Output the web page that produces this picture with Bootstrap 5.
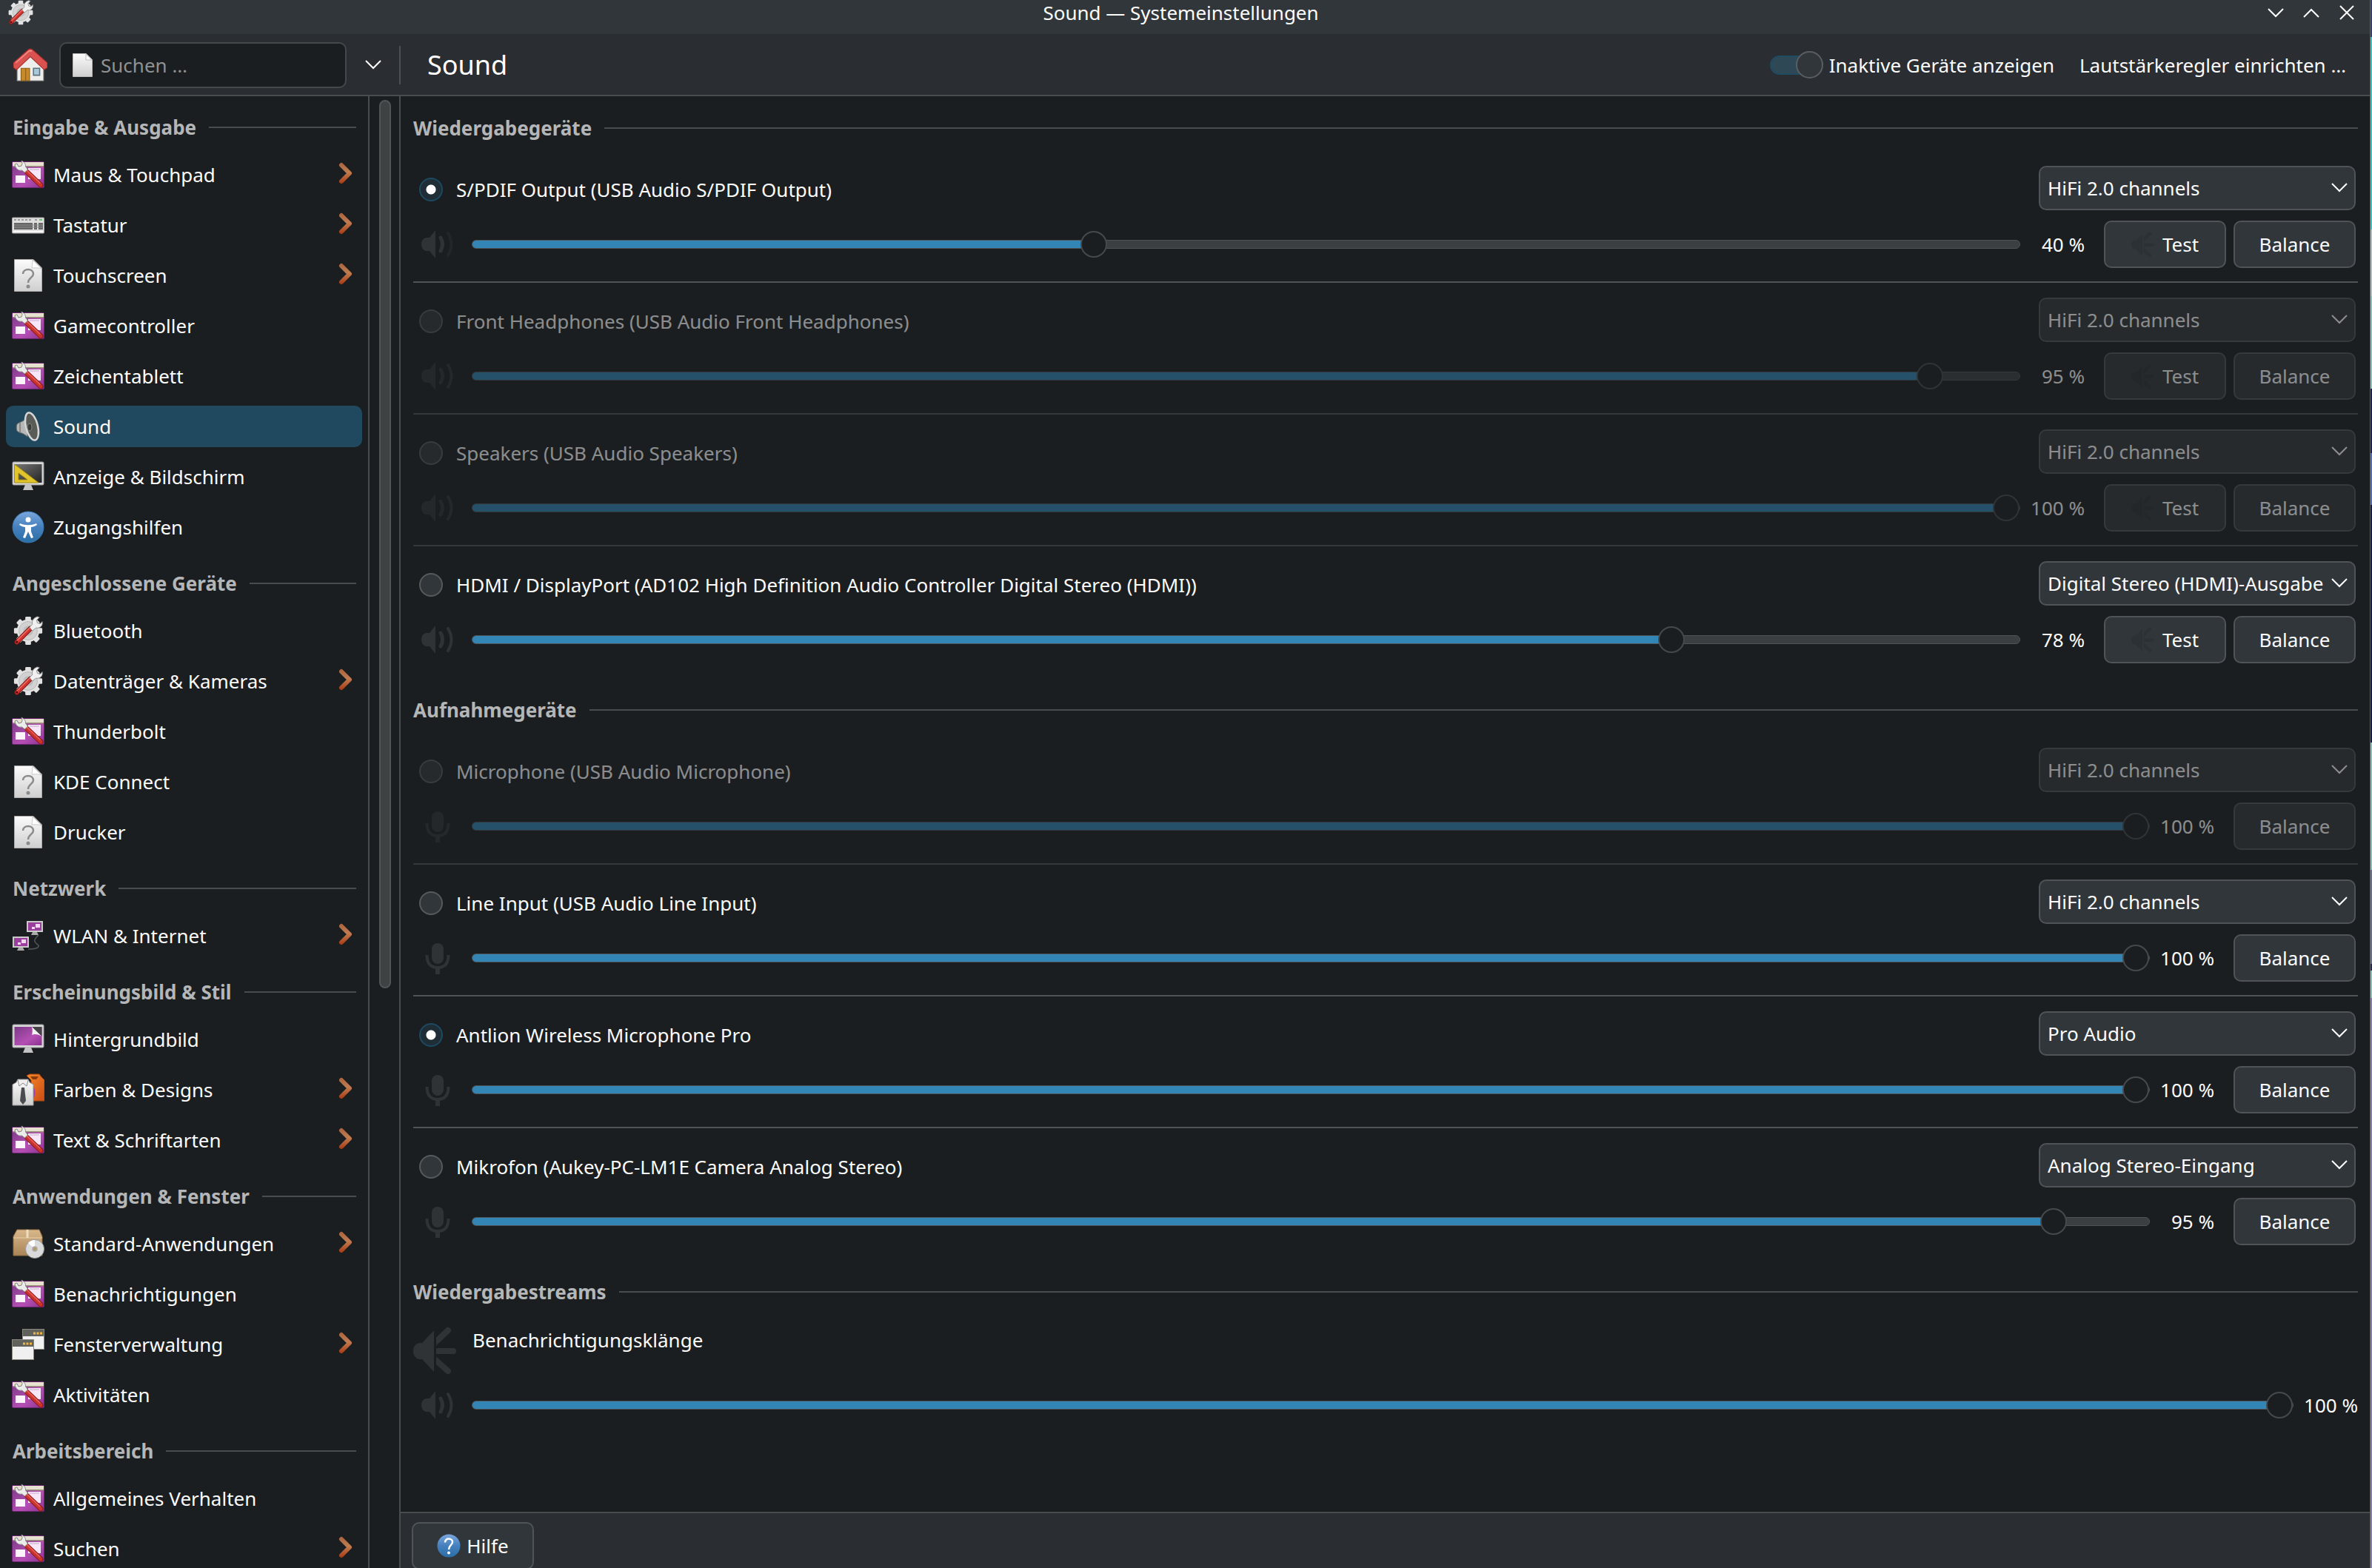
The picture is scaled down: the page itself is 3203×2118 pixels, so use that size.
<!DOCTYPE html>
<html lang="de" data-bs-theme="dark">
<head>
<meta charset="utf-8">
<meta name="viewport" content="width=device-width, initial-scale=1">
<title>Sound — Systemeinstellungen</title>
<link href="https://cdn.jsdelivr.net/npm/bootstrap@5.3.0/dist/css/bootstrap.min.css" rel="stylesheet">
<style>
:root{--view:#1b1e20;--bar:#2a2d32;--btn:#31363b;--line:#494c4f;--edge:#505458;--blue:#3285b5;--ink:#fcfcfc}
html,body{height:100%}
body{font-family:"Noto Sans",sans-serif;font-size:26px;line-height:36px;color:var(--ink);overflow:hidden;padding-right:2px;
 background:linear-gradient(#3c3a78 0 50px,#1fd0cc 50px 310px,#b4bcbc 310px 400px,#7fc9b8 400px 525px,#1c1f5c 525px 612px,#4a6cc0 612px 682px,#151a50 682px 1003px,#7fc4b8 1003px 1175px,#6a6f96 1175px 1302px,#28285a 1302px 1311px,#7fc4b8 1311px 1348px,#8d7bb8 1348px)}
svg{display:block;flex:none}
.win{background:var(--view);border-right:1px solid #5b5e61}
.titlebar{height:46px;background:#31363b;padding:0 20px 12px 9px}
.winbtn{background:none;border:0;padding:0;width:22px;color:var(--ink)}
.winbtns{gap:26px}
.side-cell{flex:1 1 0}
.toolbar{height:84px;background:var(--bar);border-bottom:2px solid var(--line);padding-top:2px}
.tool-left{width:541px;padding:0 0 0 18px}
.searchbox{width:388px;height:62px;background:var(--view);border:2px solid #45484b;border-radius:10px;padding:0 16px;gap:11px}
.searchbox input{background:none;border:0;outline:0;padding:0;color:var(--ink);font:inherit;min-width:0}
.searchbox input::placeholder{color:#8f9294;opacity:1}
.flatbtn{background:none;border:0;padding:0;color:var(--ink)}
.vsep{width:2px;height:52px;background:#4d5053}
.page-title{font-size:36px;line-height:48px;margin:0 auto 0 36px;font-weight:400}
.setup{margin:0 32px 0 34px}
.switch{appearance:none;width:72px;height:26px;margin:0;border:2px solid #1f4c63;border-radius:13px;background:#2f4856}
.switch::after{content:"";display:block;width:37px;height:37px;margin:-8px -2px 0 auto;border-radius:50%;background:var(--btn);border:2px solid #5a5e61}
.sidebar{width:499px;border-right:2px solid var(--line)}
.sidebar > *{flex:none}
.scrollcol{width:42px;border-right:2px solid var(--line);padding:5px 11px 0 13px}
.thumb{height:60.5%;background:#3f4242;border:2px solid #525556;border-radius:8px}
.sec{font-size:26px;line-height:36px;font-weight:700;color:#b4b6b7;margin:0;gap:17px}
.sec::after{content:"";flex:1;height:2px;background:var(--line)}
.sidebar .sec{height:72px;padding:12px 16px 0 17px}
.pane .sec{height:74px;padding-top:12px}
.navrow{height:56px;margin:6px 8px;padding:0 12px 0 8px;border-radius:10px;color:var(--ink);text-decoration:none;gap:12px}
.navrow.on{background:#20485e}
.more{margin-bottom:4px}
.pane{padding:0 16px 0 17px}
.device{padding:20px 3px 18px 8px;min-width:0;gap:14px}
.devlist{padding-bottom:2px}
.devitem{border-bottom:2px solid #505356}
.devitem:last-child{border-bottom:0}
.devitem:disabled{opacity:.5}
.head-line{height:60px;gap:18px}
.dev-name{gap:18px;padding-top:4px}
.vol-line{min-height:64px}
.rb{appearance:none;width:32px;height:32px;margin:0;border-radius:50%;border:2px solid #565a5d;background:var(--btn);flex:none}
.rb:checked{background:radial-gradient(circle,#fff 0 6px,#1e2d36 7px);border-color:#1d4a63}
.profile{width:428px;height:60px;font-size:26px;line-height:36px;color:var(--ink);background-color:var(--btn);border:2px solid var(--edge);border-radius:10px;padding:0 36px 0 10px;
 background-image:url("data:image/svg+xml,%3Csvg xmlns='http://www.w3.org/2000/svg' viewBox='0 0 22 13'%3E%3Cpath d='M1 1l10 10L21 1' fill='none' stroke='%23fcfcfc' stroke-width='2'/%3E%3C/svg%3E");background-size:22px 13px;background-position:right 9px center}
.profile:disabled{background-color:var(--btn);color:var(--ink)}
.push{--bs-btn-font-size:26px;--bs-btn-line-height:36px;--bs-btn-color:var(--ink);--bs-btn-bg:var(--btn);--bs-btn-border-color:var(--edge);--bs-btn-border-width:2px;--bs-btn-border-radius:10px;--bs-btn-padding-x:0px;--bs-btn-padding-y:0px;
 --bs-btn-disabled-color:var(--ink);--bs-btn-disabled-bg:var(--btn);--bs-btn-disabled-border-color:var(--edge);--bs-btn-disabled-opacity:1;--bs-btn-hover-color:var(--ink);--bs-btn-hover-bg:#3a4046;width:165px;height:64px}
.vol{appearance:none;background:none;height:36px;margin:0 0 0 25px;flex:1;min-width:0}
.vol::-webkit-slider-runnable-track{height:12px;border-radius:6px;border:1px solid #505355;
 background:linear-gradient(var(--blue),var(--blue)) 0 0/calc(18px + (100% - 36px)*var(--v)/100) 100% no-repeat,#3c3f41}
.vol::-webkit-slider-thumb{appearance:none;width:36px;height:36px;margin-top:-13px;border-radius:50%;background:var(--view);border:2px solid #46494b}
.pct{width:87px;text-align:right;white-space:nowrap}
.btns{margin-left:26px;gap:10px}
.glyph{color:#2f3336;margin-left:2px}
.push .glyph{color:#2c3135;margin-left:0}
.footer{background:var(--bar);border-top:2px solid var(--line);height:76px;padding:12px 15px 0}
.stream{padding:16px 0 0;gap:22px}
.stream-vol{padding-left:8px;margin-top:20px}
</style>
</head>
<body>
<svg width="0" height="0" class="position-absolute" aria-hidden="true">
<defs>
<linearGradient id="gp" x1="0" y1="0" x2="1" y2="1"><stop offset="0" stop-color="#7a3a86"/><stop offset=".6" stop-color="#b44fb4"/><stop offset="1" stop-color="#8a3290"/></linearGradient>
<linearGradient id="gw" x1="0" y1="0" x2="0" y2="1"><stop offset="0" stop-color="#fbfbfb"/><stop offset="1" stop-color="#cfcfcf"/></linearGradient>
<linearGradient id="gb" x1="0" y1="0" x2="0" y2="1"><stop offset="0" stop-color="#7aa8dc"/><stop offset=".5" stop-color="#4580bd"/><stop offset="1" stop-color="#2c6ea6"/></linearGradient>
<linearGradient id="go" gradientUnits="userSpaceOnUse" x1="0" y1="0" x2="0" y2="30"><stop offset="0" stop-color="#a8623c"/><stop offset=".45" stop-color="#c07c50"/><stop offset="1" stop-color="#a83610"/></linearGradient>
<linearGradient id="gd" x1="0" y1="0" x2="1" y2="1"><stop offset="0" stop-color="#777"/><stop offset="1" stop-color="#222"/></linearGradient>
<linearGradient id="gx" x1="0" y1="0" x2="0" y2="1"><stop offset="0" stop-color="#d8b98c"/><stop offset="1" stop-color="#a98456"/></linearGradient>
<linearGradient id="gs" x1="0" y1="0" x2="1" y2="1"><stop offset="0" stop-color="#f58a2a"/><stop offset="1" stop-color="#cc4a16"/></linearGradient>
<clipPath id="rays"><path d="M31 0h33v64H31z"/></clipPath>
</defs>
<symbol id="tool" viewBox="0 0 44 44">
 <rect x=".5" y="4.500" width="43" height="35" rx="1.500" fill="url(#gp)" stroke="#6a2470"/>
 <path d="M1 5h42v5H1z" fill="#e6e0cf"/><path d="M1 10h42v1.500H1z" fill="#9a8f78"/>
 <path d="M22 13h17v15H22z" fill="#f6e6f8"/><path d="M24 15h13" stroke="#c9a8cf"/>
 <path d="M5 23h13v10H5z" fill="#fbf4fc"/>
 <path d="M20 18l19 18" stroke="#8c1a18" stroke-width="7" stroke-linecap="round"/><path d="M20 18l19 18" stroke="#c9332e" stroke-width="5" stroke-linecap="round"/><path d="M20 16l18 17" stroke="#ea655c" stroke-width="1.500" stroke-linecap="round"/>
 <path d="M13 3c4 2 6 5 5.500 8l3 4-4 4-4-3C9 17 5 14 4 8l3-1 2 4 4-1 1-3z" fill="#ececea" stroke="#8a8a88"/>
</symbol>
<symbol id="gear" viewBox="0 0 44 44">
 <g fill="#e2e2e2"><circle cx="22" cy="22" r="16"/>
 <g id="t4"><rect x="18" y="2" width="8" height="40" rx="1.500"/><rect x="2" y="18" width="40" height="8" rx="1.500"/></g>
 <use href="#t4" transform="rotate(45 22 22)"/></g>
 <circle cx="22" cy="22" r="13" fill="#d2d2d2" stroke="#b8b8b8"/><circle cx="22" cy="22" r="7" fill="#bdbdbd"/>
 <path d="M6 38L25 19" stroke="#7d1515" stroke-width="7" stroke-linecap="round"/><path d="M6 38L25 19" stroke="#d23430" stroke-width="5" stroke-linecap="round"/>
 <path d="M7 35L24 18" stroke="#f0736a" stroke-width="1.500" stroke-linecap="round"/>
 <path d="M24 17l4-4c-1-5 1-9 7-11l3 1-4 4 1 4 4 1 3-3c1 6-3 10-9 9l-5 4z" fill="#f0f0f0" stroke="#8c8c8c"/><circle cx="6" cy="38" r="1.500" fill="#4d0d0d"/>
</symbol>
<symbol id="docq" viewBox="0 0 44 44">
 <path d="M3.500.5H29L40.500 12v31.500h-37z" fill="url(#gw)" stroke="#a9a9a9"/><path d="M28 1c0 6-1 10-1 11 3 0 8-1 13 1z" fill="#fff" stroke="#bdbdbd" stroke-width=".8"/>
 <path d="M15 20c0-8 14-8 14 0 0 5-7 5-7 12" fill="none" stroke="#8b8b8b" stroke-width="2.500"/><circle cx="22" cy="37" r="2.500" fill="#8b8b8b"/>
</symbol>
<symbol id="keys" viewBox="0 0 44 44">
 <rect x=".5" y="12" width="43" height="21" rx="1" fill="#dedede" stroke="#a5a5a5"/><path d="M3 15h25M31 15h4" stroke="#999" stroke-width="2" stroke-dasharray="3 2"/><path d="M37 15h4" stroke="#6fc06f" stroke-width="2"/>
 <path d="M3 19h25v9H3zM30 19h4v9h-4zM36 19h6v9h-6z" fill="#666"/><path d="M3 22h39M3 25h39" stroke="#8c8c8c"/><path d="M2 31h40" stroke="#fff" stroke-width="1.500"/>
</symbol>
<symbol id="horn" viewBox="0 0 44 44">
 <path d="M7 19c3-3 8-3 14-9v26c-6-6-11-5-14-8-1-3-1-6 0-9z" fill="#b7b7b7" stroke="#6d6d6d"/><path d="M11 17v14" stroke="#777" stroke-width="1.500"/>
 <ellipse cx="27" cy="22" rx="8" ry="19" transform="rotate(-14 27 22)" fill="#5a5c57" stroke="#d6d6d6" stroke-width="2.500"/><ellipse cx="24" cy="23" rx="3" ry="5" fill="#3b3d3a" stroke="#8a8a8a"/>
</symbol>
<symbol id="ruler" viewBox="0 0 44 44">
 <rect x="1" y="2" width="42" height="31" rx="1.500" fill="#d8d8d8" stroke="#9c9c9c"/><path d="M3.500 5h37v25h-37z" fill="url(#gd)"/>
 <path d="M3.500 5L36 30H3.500zM9 17v9h12z" fill="#e2c52c" stroke="#a38a10" fill-rule="evenodd"/><path d="M18 33h8l3 7H15z" fill="#c4c4c4"/>
</symbol>
<symbol id="wall" viewBox="0 0 44 44">
 <rect x="1" y="2" width="42" height="31" rx="1.500" fill="#d8d8d8" stroke="#9c9c9c"/><path d="M3.500 5h37v25h-37z" fill="url(#gp)"/>
 <path d="M27 5h13.500v13z" fill="#444"/><path d="M27 5c1 4 1 8 0 11 4-2 9-1 13.500 2z" fill="#f2f2f2"/><path d="M18 33h8l3 7H15z" fill="#c4c4c4"/>
</symbol>
<symbol id="access" viewBox="0 0 44 44">
 <circle cx="22" cy="22" r="21" fill="url(#gb)" stroke="#3a77b0"/><circle cx="22" cy="12" r="3.500" fill="#fff"/>
 <path d="M11 17c7 3 15 3 22 0l1 2c-3 2-6 3-8 3v6l3 8-3 1-4-9-4 9-3-1 3-8v-6c-2 0-5-1-8-3z" fill="#fff"/>
</symbol>
<symbol id="net" viewBox="0 0 44 44">
 <g id="mon"><rect x="20" y="2" width="22" height="15" fill="#c9c9c9"/><path d="M22 4h18v11H22z" fill="#9a3f9c"/><path d="M32 6h6v5h-6zM27 10h4v3h-4z" fill="#f3d8f4"/><path d="M28 17h6l2 4h-10z" fill="#aaa"/></g>
 <use href="#mon" x="-19" y="21"/><path d="M36 21c-6 6-8 8 0 14 1 4-6 5-14 5" fill="none" stroke="#55585a" stroke-width="1.500"/>
</symbol>
<symbol id="shirt" viewBox="0 0 44 44">
 <path d="M20 3l4-2h13l3 4 4 4v28H26V9z" fill="url(#gs)" stroke="#b14a12"/><path d="M25 4h11l-3 4h-5z" fill="#8a3a08"/><path d="M26 15c7 4 6 14 3 20h-4z" fill="#a23ca8"/>
 <path d="M1 15l5-3 2-4h14l2 4 5 3v28H1z" fill="url(#gw)" stroke="#9a9a9a"/><path d="M8 9l2 8 5-4 5 4 2-8" fill="#eee" stroke="#8a8a8a"/><path d="M13 19h4l2 18-4 5-4-5z" fill="#4a4c50"/>
</symbol>
<symbol id="pkg" viewBox="0 0 44 44">
 <path d="M7 3h30l4 9v26H2V12z" fill="url(#gx)" stroke="#8d6c42"/><path d="M2 14h39" stroke="#e8cfa6"/><path d="M21 3v11" stroke="#ecdcc0" stroke-width="3"/>
 <circle cx="31" cy="29" r="12.500" fill="#dadada" stroke="#999"/><path d="M31 29l-9-8a12 12 0 0 1 9-4z" fill="#fff"/><circle cx="31" cy="29" r="3" fill="#b79a6c" stroke="#aaa" stroke-width="1.500"/>
</symbol>
<symbol id="wins" viewBox="0 0 44 44">
 <g id="w1"><rect x="14.500" y="1.500" width="29" height="27" fill="#f0f0f0" stroke="#8a8a80"/><path d="M15 2h28v9H15z" fill="#62625c"/><path d="M29 7h12" stroke="#f0b440" stroke-width="3" stroke-dasharray="3 1.500"/></g>
 <use href="#w1" x="-14" y="14"/>
</symbol>
<symbol id="home" viewBox="0 0 44 44">
 <path d="M5 22L22 8l17 14v20H5z" fill="#eeeeec" stroke="#999"/><path d="M10 26h11v16H10z" fill="#c88a28" stroke="#8a5a10"/><path d="M16 26v16" stroke="#8a5a10"/>
 <path d="M26 26h8v9h-8z" fill="#a9c8d8" stroke="#5d7480" stroke-width="1.500"/><path d="M0 25v-6L18 3q4-4 8 0l18 16v6l-4 3L22 11 4 28z" fill="#d9524f" stroke="#a32c2a"/><path d="M3 19L20 4q2-1 4 0" stroke="#f08e8a" stroke-width="1.500" fill="none"/>
</symbol>
<symbol id="go-next" viewBox="0 0 20 30"><path d="M4 4l11 11L4 26" fill="none" stroke="url(#go)" stroke-width="6" stroke-linecap="round" stroke-linejoin="round"/></symbol>
<symbol id="down" viewBox="0 0 22 13"><path d="M1 1l10 10L21 1" fill="none" stroke="currentColor" stroke-width="2"/></symbol>
<symbol id="vol3" viewBox="0 0 44 44"><path d="M20 3v38L12 31H7q-6-2-6-9t6-9h5z" fill="currentColor"/><path d="M27 13q5 9 0 18" fill="none" stroke="currentColor" stroke-width="5" stroke-linecap="round"/><path d="M37 7q9 15 0 30" fill="none" stroke="currentColor" stroke-width="4" stroke-linecap="round"/></symbol>
<symbol id="vol2" viewBox="0 0 44 44"><path d="M20 3v38L12 31H7q-6-2-6-9t6-9h5z" fill="currentColor"/><path d="M27 13q5 9 0 18" fill="none" stroke="currentColor" stroke-width="5" stroke-linecap="round"/><path d="M37 7q9 15 0 30" fill="none" stroke="currentColor" stroke-width="4" stroke-linecap="round" opacity=".4"/></symbol>
<symbol id="mic" viewBox="0 0 44 44"><rect x="15" y="2" width="16" height="28" rx="8" fill="currentColor"/><path d="M8.500 18q0 17 14.500 17t14.500-17" fill="none" stroke="currentColor" stroke-width="4"/><path d="M23 34v10" stroke="currentColor" stroke-width="6"/></symbol>
<symbol id="loud" viewBox="0 0 64 64"><path d="M28 5v56L12 44H8q-8-2-8-11t8-11h4z" fill="currentColor"/><path d="M29 22L47 5M29 33h25M29 44l18 16" fill="none" stroke="currentColor" stroke-width="8" stroke-linecap="round" clip-path="url(#rays)"/></symbol>
</svg>

<div class="win d-flex flex-column h-100">
 <header class="titlebar d-flex align-items-center">
  <div class="side-cell"><svg width="38" height="36"><use href="#gear"/></svg></div>
  <div>Sound — Systemeinstellungen</div>
  <div class="side-cell winbtns d-flex justify-content-end align-items-center">
   <button class="winbtn" aria-label="Minimieren"><svg width="22" height="13"><use href="#down"/></svg></button>
   <button class="winbtn" aria-label="Maximieren"><svg width="22" height="13" viewBox="0 0 22 13"><path d="M1 12L11 2l10 10" fill="none" stroke="currentColor" stroke-width="2"/></svg></button>
   <button class="winbtn" aria-label="Schließen"><svg width="22" height="20" viewBox="0 0 22 20"><path d="M2 1l18 18M20 1L2 19" stroke="currentColor" stroke-width="2"/></svg></button>
  </div>
 </header>

 <div class="toolbar d-flex align-items-center">
  <div class="tool-left d-flex align-items-center">
   <button class="flatbtn me-3" aria-label="Startseite"><svg width="46" height="46"><use href="#home"/></svg></button>
   <div class="searchbox d-flex align-items-center">
    <svg width="27" height="34" viewBox="0 0 27 34"><path d="M.5 1.500h18l8 8v23H.5z" fill="url(#gw)" stroke="#bbb"/><path d="M18 2v8h8z" fill="#fff" stroke="#bbb"/></svg>
    <input type="text" placeholder="Suchen …" aria-label="Suchen" class="flex-fill">
   </div>
   <button class="flatbtn flex-fill d-flex justify-content-center" aria-label="Menü"><svg width="22" height="13"><use href="#down"/></svg></button>
   <div class="vsep"></div>
  </div>
  <h1 class="page-title">Sound</h1>
  <label class="d-flex align-items-center gap-2"><input type="checkbox" role="switch" class="switch" checked><span>Inaktive Geräte anzeigen</span></label>
  <button class="flatbtn setup">Lautstärkeregler einrichten …</button>
 </div>

 <div class="d-flex flex-fill overflow-hidden">
  <nav class="sidebar d-flex flex-column flex-shrink-0 overflow-hidden">
   <h2 class="sec d-flex align-items-center">Eingabe &amp; Ausgabe</h2>
   <a href="#" class="navrow d-flex align-items-center"><svg width="44" height="44"><use href="#tool"/></svg><span class="flex-fill">Maus &amp; Touchpad</span><svg class="more" width="20" height="30"><use href="#go-next"/></svg></a>
   <a href="#" class="navrow d-flex align-items-center"><svg width="44" height="44"><use href="#keys"/></svg><span class="flex-fill">Tastatur</span><svg class="more" width="20" height="30"><use href="#go-next"/></svg></a>
   <a href="#" class="navrow d-flex align-items-center"><svg width="44" height="44"><use href="#docq"/></svg><span class="flex-fill">Touchscreen</span><svg class="more" width="20" height="30"><use href="#go-next"/></svg></a>
   <a href="#" class="navrow d-flex align-items-center"><svg width="44" height="44"><use href="#tool"/></svg><span>Gamecontroller</span></a>
   <a href="#" class="navrow d-flex align-items-center"><svg width="44" height="44"><use href="#tool"/></svg><span>Zeichentablett</span></a>
   <a href="#" class="navrow on d-flex align-items-center" aria-current="page"><svg width="44" height="44"><use href="#horn"/></svg><span>Sound</span></a>
   <a href="#" class="navrow d-flex align-items-center"><svg width="44" height="44"><use href="#ruler"/></svg><span>Anzeige &amp; Bildschirm</span></a>
   <a href="#" class="navrow d-flex align-items-center"><svg width="44" height="44"><use href="#access"/></svg><span>Zugangshilfen</span></a>
   <h2 class="sec d-flex align-items-center">Angeschlossene Geräte</h2>
   <a href="#" class="navrow d-flex align-items-center"><svg width="44" height="42"><use href="#gear"/></svg><span>Bluetooth</span></a>
   <a href="#" class="navrow d-flex align-items-center"><svg width="44" height="42"><use href="#gear"/></svg><span class="flex-fill">Datenträger &amp; Kameras</span><svg class="more" width="20" height="30"><use href="#go-next"/></svg></a>
   <a href="#" class="navrow d-flex align-items-center"><svg width="44" height="44"><use href="#tool"/></svg><span>Thunderbolt</span></a>
   <a href="#" class="navrow d-flex align-items-center"><svg width="44" height="44"><use href="#docq"/></svg><span>KDE Connect</span></a>
   <a href="#" class="navrow d-flex align-items-center"><svg width="44" height="44"><use href="#docq"/></svg><span>Drucker</span></a>
   <h2 class="sec d-flex align-items-center">Netzwerk</h2>
   <a href="#" class="navrow d-flex align-items-center"><svg width="44" height="44"><use href="#net"/></svg><span class="flex-fill">WLAN &amp; Internet</span><svg class="more" width="20" height="30"><use href="#go-next"/></svg></a>
   <h2 class="sec d-flex align-items-center">Erscheinungsbild &amp; Stil</h2>
   <a href="#" class="navrow d-flex align-items-center"><svg width="44" height="44"><use href="#wall"/></svg><span>Hintergrundbild</span></a>
   <a href="#" class="navrow d-flex align-items-center"><svg width="44" height="44"><use href="#shirt"/></svg><span class="flex-fill">Farben &amp; Designs</span><svg class="more" width="20" height="30"><use href="#go-next"/></svg></a>
   <a href="#" class="navrow d-flex align-items-center"><svg width="44" height="44"><use href="#tool"/></svg><span class="flex-fill">Text &amp; Schriftarten</span><svg class="more" width="20" height="30"><use href="#go-next"/></svg></a>
   <h2 class="sec d-flex align-items-center">Anwendungen &amp; Fenster</h2>
   <a href="#" class="navrow d-flex align-items-center"><svg width="44" height="44"><use href="#pkg"/></svg><span class="flex-fill">Standard-Anwendungen</span><svg class="more" width="20" height="30"><use href="#go-next"/></svg></a>
   <a href="#" class="navrow d-flex align-items-center"><svg width="44" height="44"><use href="#tool"/></svg><span>Benachrichtigungen</span></a>
   <a href="#" class="navrow d-flex align-items-center"><svg width="44" height="44"><use href="#wins"/></svg><span class="flex-fill">Fensterverwaltung</span><svg class="more" width="20" height="30"><use href="#go-next"/></svg></a>
   <a href="#" class="navrow d-flex align-items-center"><svg width="44" height="44"><use href="#tool"/></svg><span>Aktivitäten</span></a>
   <h2 class="sec d-flex align-items-center">Arbeitsbereich</h2>
   <a href="#" class="navrow d-flex align-items-center"><svg width="44" height="44"><use href="#tool"/></svg><span>Allgemeines Verhalten</span></a>
   <a href="#" class="navrow d-flex align-items-center"><svg width="44" height="44"><use href="#tool"/></svg><span class="flex-fill">Suchen</span><svg class="more" width="20" height="30"><use href="#go-next"/></svg></a>
  </nav>
  <div class="scrollcol flex-shrink-0"><div class="thumb"></div></div>

  <div class="d-flex flex-column flex-fill overflow-hidden">
   <main class="pane flex-fill overflow-hidden">
    <h2 class="sec d-flex align-items-center">Wiedergabegeräte</h2>
    <div class="devlist">
     <fieldset class="devitem"><div class="device d-flex flex-column">
      <div class="head-line d-flex align-items-center"><div class="dev-name d-flex align-items-center flex-fill"><input class="rb" type="radio" name="out" id="o1" checked><label for="o1">S/PDIF Output (USB Audio S/PDIF Output)</label></div>
       <select class="form-select profile" aria-label="Profil"><option>HiFi 2.0 channels</option></select></div>
      <div class="vol-line d-flex align-items-center"><svg class="glyph" width="44" height="44"><use href="#vol2"/></svg><input class="vol" type="range" aria-label="Lautstärke" value="40" style="--v:40"><span class="pct">40 %</span>
       <div class="btns d-flex"><button class="btn push d-flex align-items-center justify-content-center gap-2"><svg class="glyph" width="34" height="34"><use href="#loud"/></svg>Test</button><button class="btn push">Balance</button></div></div>
     </div></fieldset>
     <fieldset class="devitem" disabled><div class="device d-flex flex-column">
      <div class="head-line d-flex align-items-center"><div class="dev-name d-flex align-items-center flex-fill"><input class="rb" type="radio" name="out" id="o2"><label for="o2">Front Headphones (USB Audio Front Headphones)</label></div>
       <select class="form-select profile" aria-label="Profil"><option>HiFi 2.0 channels</option></select></div>
      <div class="vol-line d-flex align-items-center"><svg class="glyph" width="44" height="44"><use href="#vol3"/></svg><input class="vol" type="range" aria-label="Lautstärke" value="95" style="--v:95"><span class="pct">95 %</span>
       <div class="btns d-flex"><button class="btn push d-flex align-items-center justify-content-center gap-2"><svg class="glyph" width="34" height="34"><use href="#loud"/></svg>Test</button><button class="btn push">Balance</button></div></div>
     </div></fieldset>
     <fieldset class="devitem" disabled><div class="device d-flex flex-column">
      <div class="head-line d-flex align-items-center"><div class="dev-name d-flex align-items-center flex-fill"><input class="rb" type="radio" name="out" id="o3"><label for="o3">Speakers (USB Audio Speakers)</label></div>
       <select class="form-select profile" aria-label="Profil"><option>HiFi 2.0 channels</option></select></div>
      <div class="vol-line d-flex align-items-center"><svg class="glyph" width="44" height="44"><use href="#vol3"/></svg><input class="vol" type="range" aria-label="Lautstärke" value="100" style="--v:100"><span class="pct">100 %</span>
       <div class="btns d-flex"><button class="btn push d-flex align-items-center justify-content-center gap-2"><svg class="glyph" width="34" height="34"><use href="#loud"/></svg>Test</button><button class="btn push">Balance</button></div></div>
     </div></fieldset>
     <fieldset class="devitem"><div class="device d-flex flex-column">
      <div class="head-line d-flex align-items-center"><div class="dev-name d-flex align-items-center flex-fill"><input class="rb" type="radio" name="out" id="o4"><label for="o4">HDMI / DisplayPort (AD102 High Definition Audio Controller Digital Stereo (HDMI))</label></div>
       <select class="form-select profile" aria-label="Profil"><option>Digital Stereo (HDMI)-Ausgabe</option></select></div>
      <div class="vol-line d-flex align-items-center"><svg class="glyph" width="44" height="44"><use href="#vol3"/></svg><input class="vol" type="range" aria-label="Lautstärke" value="78" style="--v:78"><span class="pct">78 %</span>
       <div class="btns d-flex"><button class="btn push d-flex align-items-center justify-content-center gap-2"><svg class="glyph" width="34" height="34"><use href="#loud"/></svg>Test</button><button class="btn push">Balance</button></div></div>
     </div></fieldset>
    </div>

    <h2 class="sec d-flex align-items-center">Aufnahmegeräte</h2>
    <div class="devlist">
     <fieldset class="devitem" disabled><div class="device d-flex flex-column">
      <div class="head-line d-flex align-items-center"><div class="dev-name d-flex align-items-center flex-fill"><input class="rb" type="radio" name="in" id="i1"><label for="i1">Microphone (USB Audio Microphone)</label></div>
       <select class="form-select profile" aria-label="Profil"><option>HiFi 2.0 channels</option></select></div>
      <div class="vol-line d-flex align-items-center"><svg class="glyph" width="44" height="44"><use href="#mic"/></svg><input class="vol" type="range" aria-label="Lautstärke" value="100" style="--v:100"><span class="pct">100 %</span>
       <div class="btns d-flex"><button class="btn push">Balance</button></div></div>
     </div></fieldset>
     <fieldset class="devitem"><div class="device d-flex flex-column">
      <div class="head-line d-flex align-items-center"><div class="dev-name d-flex align-items-center flex-fill"><input class="rb" type="radio" name="in" id="i2"><label for="i2">Line Input (USB Audio Line Input)</label></div>
       <select class="form-select profile" aria-label="Profil"><option>HiFi 2.0 channels</option></select></div>
      <div class="vol-line d-flex align-items-center"><svg class="glyph" width="44" height="44"><use href="#mic"/></svg><input class="vol" type="range" aria-label="Lautstärke" value="100" style="--v:100"><span class="pct">100 %</span>
       <div class="btns d-flex"><button class="btn push">Balance</button></div></div>
     </div></fieldset>
     <fieldset class="devitem"><div class="device d-flex flex-column">
      <div class="head-line d-flex align-items-center"><div class="dev-name d-flex align-items-center flex-fill"><input class="rb" type="radio" name="in" id="i3" checked><label for="i3">Antlion Wireless Microphone Pro</label></div>
       <select class="form-select profile" aria-label="Profil"><option>Pro Audio</option></select></div>
      <div class="vol-line d-flex align-items-center"><svg class="glyph" width="44" height="44"><use href="#mic"/></svg><input class="vol" type="range" aria-label="Lautstärke" value="100" style="--v:100"><span class="pct">100 %</span>
       <div class="btns d-flex"><button class="btn push">Balance</button></div></div>
     </div></fieldset>
     <fieldset class="devitem"><div class="device d-flex flex-column">
      <div class="head-line d-flex align-items-center"><div class="dev-name d-flex align-items-center flex-fill"><input class="rb" type="radio" name="in" id="i4"><label for="i4">Mikrofon (Aukey-PC-LM1E Camera Analog Stereo)</label></div>
       <select class="form-select profile" aria-label="Profil"><option>Analog Stereo-Eingang</option></select></div>
      <div class="vol-line d-flex align-items-center"><svg class="glyph" width="44" height="44"><use href="#mic"/></svg><input class="vol" type="range" aria-label="Lautstärke" value="95" style="--v:95"><span class="pct">95 %</span>
       <div class="btns d-flex"><button class="btn push">Balance</button></div></div>
     </div></fieldset>
    </div>

    <h2 class="sec d-flex align-items-center">Wiedergabestreams</h2>
    <div class="stream d-flex align-items-start"><svg width="58" height="64" viewBox="0 0 58 64" color="#2f3336"><use href="#loud" width="64" height="64"/></svg><label for="s1">Benachrichtigungsklänge</label></div>
    <div class="stream-vol d-flex align-items-center"><svg class="glyph" width="44" height="44"><use href="#vol3"/></svg><input class="vol" type="range" id="s1" value="100" style="--v:100"><span class="pct">100 %</span></div>
   </main>
   <footer class="footer flex-shrink-0"><button class="btn push d-flex align-items-center justify-content-center gap-2">
    <svg width="32" height="32" viewBox="0 0 32 32"><circle cx="16" cy="16" r="15.500" fill="url(#gb)"/><path d="M11 11.500c0-7 10-6 10-.5 0 4-5 4-5 10" fill="none" stroke="#fff" stroke-width="2.500"/><circle cx="16" cy="25.500" r="2" fill="#fff"/></svg>Hilfe</button></footer>
  </div>
 </div>
</div>
<script src="https://cdn.jsdelivr.net/npm/bootstrap@5.3.0/dist/js/bootstrap.bundle.min.js"></script>
</body>
</html>
